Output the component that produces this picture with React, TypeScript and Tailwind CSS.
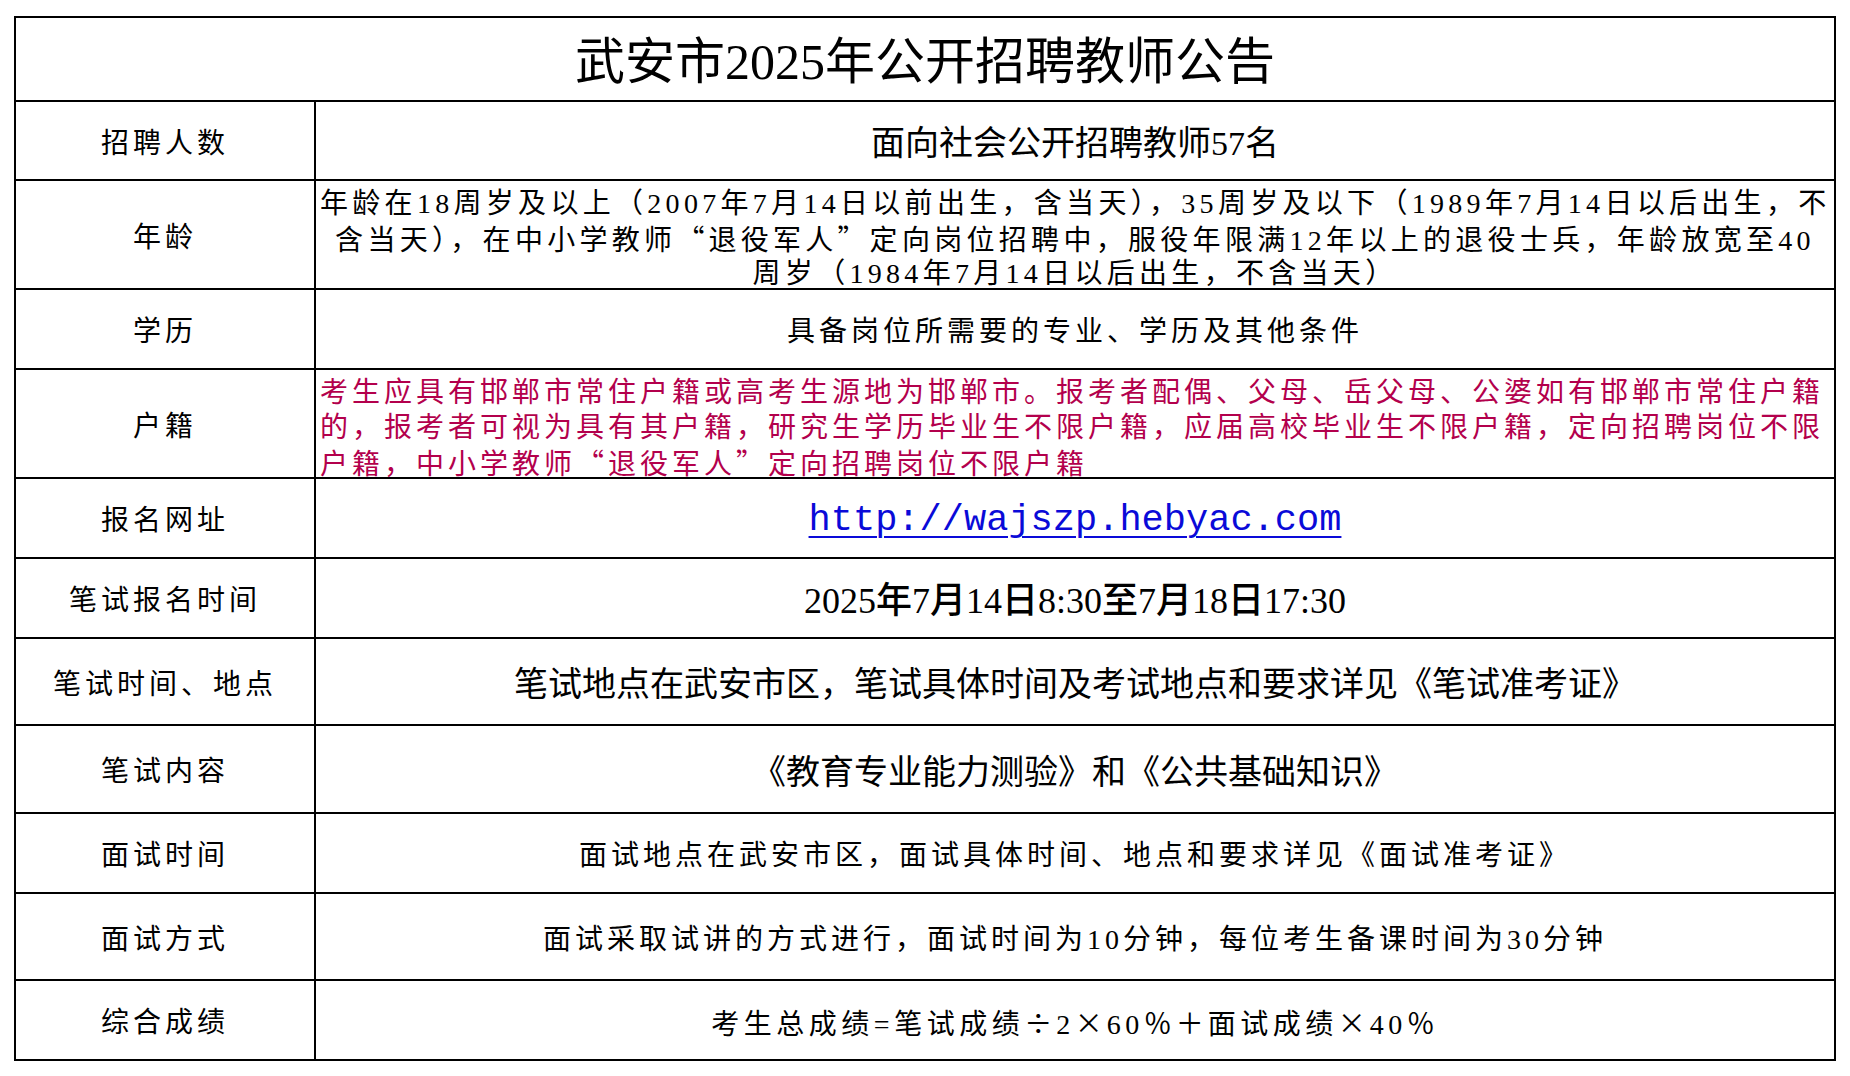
import type { ReactNode } from "react";

// full-width cell for glyphs that the serif font would draw narrow
function W({ c, side = "center" }: { c: string; side?: "left" | "right" | "center" }) {
  const align = side === "left" ? "text-left" : side === "right" ? "text-right" : "text-center";
  return (
    <span className={`inline-block w-[32px] ${align} font-['Noto_Sans_CJK_SC',sans-serif]`}>{c}</span>
  );
}

function Row({
  label,
  h,
  children,
  left = false,
  pad = "pt-[6px]",
}: {
  label: string;
  h: string;
  children: ReactNode;
  left?: boolean;
  pad?: string;
}) {
  return (
    <tr className={h}>
      <td className="border-2 border-black pt-[6px] text-center text-[28px] tracking-[4px] align-middle">{label}</td>
      <td className={`border-2 border-black px-[4px] ${pad} align-middle ${left ? "text-left" : "text-center"}`}>{children}</td>
    </tr>
  );
}

export default function App() {
  return (
    <div className="w-[1850px] h-[1076px] bg-white text-black font-['Liberation_Serif','Noto_Sans_CJK_SC',serif]">
      <div className="pt-[16px] pl-[14px]">
        <table className="border-collapse table-fixed w-[1822px]">
          <colgroup>
            <col className="w-[300px]" />
            <col />
          </colgroup>
          <tbody>
            <tr className="h-[84px]">
              <td colSpan={2} className="border-2 border-black pt-[6px] text-center text-[50px] leading-none">
                武安市2025年公开招聘教师公告
              </td>
            </tr>
            <Row label="招聘人数" h="h-[79px]">
              <span className="text-[34px]">面向社会公开招聘教师57名</span>
            </Row>
            <Row label="年龄" h="h-[109px]" pad="pt-[5px] pb-0">
              <div className="h-[102px] text-[28px] tracking-[4.3px] leading-[35px] whitespace-nowrap">
                <div className="h-[35px]">年龄在18周岁及以上（2007年7月14日以前出生，含当天），35周岁及以下（1989年7月14日以后出生，不</div>
                <div className="h-[35px]">
                  含当天），在中小学教师<W c="“" side="right" />退役军人<W c="”" side="left" />定向岗位招聘中，服役年限满12年以上的退役士兵，年龄放宽至40
                </div>
                <div className="h-[32px]">周岁（1984年7月14日以后出生，不含当天）</div>
              </div>
            </Row>
            <Row label="学历" h="h-[80px]">
              <span className="text-[28px] tracking-[4px]">具备岗位所需要的专业、学历及其他条件</span>
            </Row>
            <Row label="户籍" h="h-[109px]" left pad="pt-[5px] pb-0">
              <div className="h-[102px] text-[28px] tracking-[4px] leading-[35px] whitespace-nowrap text-[#b3004c]">
                <div className="h-[35px]">考生应具有邯郸市常住户籍或高考生源地为邯郸市。报考者配偶、父母、岳父母、公婆如有邯郸市常住户籍</div>
                <div className="h-[35px]">的，报考者可视为具有其户籍，研究生学历毕业生不限户籍，应届高校毕业生不限户籍，定向招聘岗位不限</div>
                <div className="h-[32px]">
                  户籍，中小学教师<W c="“" side="right" />退役军人<W c="”" side="left" />定向招聘岗位不限户籍
                </div>
              </div>
            </Row>
            <Row label="报名网址" h="h-[80px]">
              <span className="font-['Liberation_Mono',monospace] text-[37px] text-[#0a0ad8] underline underline-offset-[6px] decoration-2">
                http://wajszp.hebyac.com
              </span>
            </Row>
            <Row label="笔试报名时间" h="h-[80px]">
              <span className="text-[36px] font-medium">2025年7月14日8:30至7月18日17:30</span>
            </Row>
            <Row label="笔试时间、地点" h="h-[87px]">
              <span className="text-[34px]">笔试地点在武安市区，笔试具体时间及考试地点和要求详见《笔试准考证》</span>
            </Row>
            <Row label="笔试内容" h="h-[88px]">
              <span className="text-[34px]">《教育专业能力测验》和《公共基础知识》</span>
            </Row>
            <Row label="面试时间" h="h-[80px]">
              <span className="text-[28px] tracking-[4px]">面试地点在武安市区，面试具体时间、地点和要求详见《面试准考证》</span>
            </Row>
            <Row label="面试方式" h="h-[87px]">
              <span className="text-[28px] tracking-[4px]">面试采取试讲的方式进行，面试时间为10分钟，每位考生备课时间为30分钟</span>
            </Row>
            <Row label="综合成绩" h="h-[80px]">
              <span className="text-[28px] tracking-[4.5px]">
                考生总成绩=笔试成绩<W c="÷" />2<W c="×" />60<W c="％" /><W c="＋" />面试成绩<W c="×" />40<W c="％" />
              </span>
            </Row>
          </tbody>
        </table>
      </div>
    </div>
  );
}
